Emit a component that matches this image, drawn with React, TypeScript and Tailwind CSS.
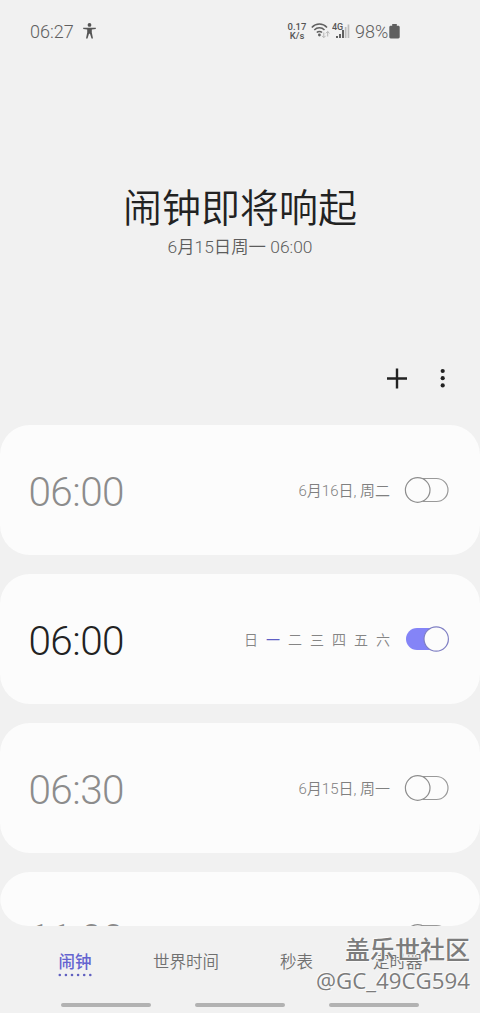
import { useState } from 'react';

interface Alarm {
  time: string;
  date?: string;
  repeat?: number[];
  on: boolean;
}

const initialAlarms: Alarm[] = [
  { time: '06:00', date: '6月16日, 周二', on: false },
  { time: '06:00', repeat: [1], on: true },
  { time: '06:30', date: '6月15日, 周一', on: false },
  { time: '11:00', date: '6月16日, 周二', on: false },
];

const weekdays = ['日', '一', '二', '三', '四', '五', '六'];

function Toggle({ on, onClick }: { on: boolean; onClick: () => void }) {
  return (
    <button onClick={onClick} className="h-7 w-[46px] shrink-0 cursor-pointer" aria-label="Toggle alarm">
      <svg width="46" height="28" viewBox="0 0 46 28" fill="none">
        {on ? (
          <>
            <rect x="2" y="3" width="42" height="22" rx="11" fill="#8484f7" />
            <circle cx="32.2" cy="14" r="12.2" fill="#fcfcfc" stroke="#8080c4" strokeWidth="1.2" />
          </>
        ) : (
          <>
            <rect x="2" y="2.5" width="42" height="23" rx="11.5" stroke="#999" strokeWidth="1.2" />
            <circle cx="13.7" cy="14" r="12.3" fill="#fcfcfc" stroke="#8e8e8e" strokeWidth="1.2" />
          </>
        )}
      </svg>
    </button>
  );
}

function StatusBar() {
  return (
    <header className="flex h-[62px] items-center text-lg leading-none text-[#606060]">
      <span className="ml-[30px] w-[45px] pt-px font-[350]">06:27</span>
      <svg className="ml-2" width="13" height="16" viewBox="0 0 13 16" fill="#555">
        <circle cx="6.5" cy="1.9" r="1.9" />
        <path d="M0.2 4.8h12.6v1.3l-4 .5v3l1.2 5.9H8.5L7 10.7H6l-1.5 4.8H3L4.2 9.6v-3L.2 6.1z" />
      </svg>
      <div className="ml-[191px] flex w-5 flex-col items-center text-[9.5px] font-medium leading-[9px] text-[#555]">
        <span>0.17</span>
        <span>K/s</span>
      </div>
      <svg className="ml-1" width="19" height="16" viewBox="0 0 19 16" fill="none" stroke="#606060" strokeWidth="1.5">
        <path d="M.8 4.4C5-.1 11.8-.1 16 4.4M3.3 7.1c2.8-3 7.4-3 10.2 0M5.8 9.6c1.5-1.6 3.7-1.6 5.2 0" />
        <circle cx="8.4" cy="12" r="1.4" fill="#606060" stroke="none" />
        <path d="M12.8 9.5v5M11 12.8l1.8 1.8 1.8-1.8M16.7 13.5v-5M14.9 10.3l1.8-1.8 1.8 1.8" stroke="#b5b5b5" strokeWidth="1" />
      </svg>
      <svg className="ml-[2px]" width="18" height="16" viewBox="0 0 18 16">
        <g fill="#606060">
          <path d="M4 13h2v2H4zM7 11h2v4H7zM10 7h2v8h-2z" />
        </g>
        <path d="M12.8 4h1.7v11h-1.7zM15.6 1.5h1.7V15h-1.7z" fill="#bcbcbc" />
        <text x="0" y="7" fontSize="9" fontWeight="500" fill="#555">4G</text>
      </svg>
      <span className="ml-[5px] w-[33px] pt-px font-[350]">98%</span>
      <svg className="ml-px" width="11" height="15" viewBox="0 0 11 15" fill="#606060">
        <path d="M3.2 0h4.6v1.7H9.3c.8 0 1.4.6 1.4 1.4v10c0 .8-.6 1.4-1.4 1.4H1.7c-.8 0-1.4-.6-1.4-1.4v-10c0-.8.6-1.4 1.4-1.4h1.5z" />
      </svg>
    </header>
  );
}

function AlarmCard({ alarm, onToggle }: { alarm: Alarm; onToggle: () => void }) {
  return (
    <li className="flex h-[130px] shrink-0 items-center rounded-[30px] bg-[#fcfcfc] pr-[30px] pl-[28.5px]">
      <span className={`flex-1 pt-1 text-[40.5px] leading-none font-light tracking-[-0.6px] ${alarm.on ? 'text-[#222]' : 'text-[#8c8c8c]'}`}>
        {alarm.time}
      </span>
      {alarm.repeat ? (
        <div className="mr-[14px] flex pt-0.5 text-sm leading-none font-[350] text-[#858585]">
          {weekdays.map((day, i) => (
            <span key={day} className={`w-[22px] text-right ${alarm.repeat?.includes(i) ? 'font-normal text-[#5f5fc4]' : ''}`}>
              {day}
            </span>
          ))}
        </div>
      ) : (
        <span className="mr-[14px] pt-[3px] text-[15px] leading-none font-[350] text-[#808080]">{alarm.date}</span>
      )}
      <Toggle on={alarm.on} onClick={onToggle} />
    </li>
  );
}

export default function App() {
  const [alarms, setAlarms] = useState(initialAlarms);

  const toggle = (idx: number) => {
    setAlarms((prev) => prev.map((a, i) => (i === idx ? { ...a, on: !a.on } : a)));
  };

  return (
    <div className="relative flex h-[1013px] w-[480px] flex-col overflow-hidden bg-[#f1f1f1] font-[Roboto,'Noto_Sans_CJK_SC',sans-serif]">
      <StatusBar />

      {/* Next alarm */}
      <section className="flex h-[286px] flex-col items-center pt-[127px]">
        <h1 className="text-[39px] leading-10 font-[350] text-[#222]">闹钟即将响起</h1>
        <p className="mt-2 text-[17.4px] leading-5 font-[350] text-[#5c5c5c]">6月15日周一 06:00</p>
      </section>

      <div className="flex h-[77px] items-start justify-end pt-[18px] pr-[34px]">
        <button aria-label="Add alarm">
          <svg width="24" height="24" viewBox="0 0 24 24" stroke="#222" strokeWidth="2.4">
            <path d="M2 12.5h20M12 2.5v20" />
          </svg>
        </button>
        <button className="ml-[30px]" aria-label="More options">
          <svg width="7" height="24" viewBox="0 0 7 24" fill="#222">
            <circle cx="3.7" cy="5" r="2.1" />
            <circle cx="3.7" cy="12.2" r="2.1" />
            <circle cx="3.7" cy="19.4" r="2.1" />
          </svg>
        </button>
      </div>

      {/* Alarm list */}
      <ul className="flex h-[501px] shrink-0 flex-col gap-[19px] overflow-hidden rounded-b-[28px]">
        {alarms.map((alarm, i) => (
          <AlarmCard key={i} alarm={alarm} onToggle={() => toggle(i)} />
        ))}
      </ul>

      {/* Tabs */}
      <nav className="flex h-[70px] pt-[27px] pl-[58px] text-[16.5px] leading-5 font-[350] text-[#707070]">
        <div className="flex w-[34px] flex-col items-center font-medium text-[#6464d0]">
          闹钟
          <svg width="34" height="4" viewBox="0 0 34 4" fill="#6060c0">
            {[0, 1, 2, 3, 4, 5].map((n) => (
              <circle key={n} cx={1.8 + n * 6.1} cy="2" r="1.3" />
            ))}
          </svg>
        </div>
        <span className="ml-[61px]">世界时间</span>
        <span className="ml-[61px]">秒表</span>
        <span className="ml-[60px]">定时器</span>
      </nav>

      {/* Gesture hints */}
      <div className="flex justify-center gap-11 pt-[7px]">
        <div className="h-1 w-[90px] rounded-full bg-[#b2b2b2]" />
        <div className="h-1 w-[90px] rounded-full bg-[#b2b2b2]" />
        <div className="h-1 w-[90px] rounded-full bg-[#b2b2b2]" />
      </div>

      <div className="absolute right-[10px] bottom-4 flex flex-col items-end whitespace-nowrap font-['Noto_Sans_CJK_SC',sans-serif] text-[#7c7c7c] [text-shadow:-1px_-1px_0_#fafafa,1px_1px_0_#fafafa]">
        <span className="text-[25px] leading-[34px] font-medium">盖乐世社区</span>
        <span className="font-['Open_Sans',sans-serif] text-[22.3px] leading-[32px]">@GC_49CG594</span>
      </div>
    </div>
  );
}
